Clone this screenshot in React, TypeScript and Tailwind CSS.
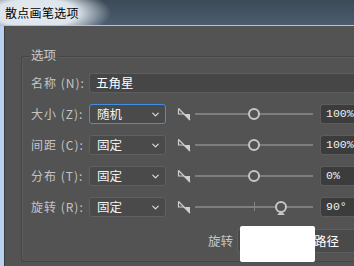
import { ChevronDown } from "lucide-react";

const cjk = "font-['Noto_Sans_CJK_SC','Noto_Sans',sans-serif]";

type Row = {
  label: string;
  value: string;
  focused?: boolean;
  amount: string;
  knob: number;
  tick?: boolean;
};

const rows: Row[] = [
  { label: "大小 (Z):", value: "随机", focused: true, amount: "100%", knob: 59 },
  { label: "间距 (C):", value: "固定", amount: "100%", knob: 59 },
  { label: "分布 (T):", value: "固定", amount: "0%", knob: 59 },
  { label: "旋转 (R):", value: "固定", amount: "90°", knob: 86, tick: true },
];

const RampIcon = () => (
  <svg width="14" height="14" viewBox="0 0 14 14" className="shrink-0">
    <path d="M1.5 1.5 L1.5 7 L7 7" fill="none" stroke="#cfcfcf" strokeWidth="1.2" />
    <path d="M1.5 1.5 L13 13" stroke="#cfcfcf" strokeWidth="1.2" />
    <path d="M6.5 7 L13 7 L13 13.5 Z" fill="#cfcfcf" />
  </svg>
);

const Slider = ({ knob, tick }: { knob: number; tick?: boolean }) => (
  <div className="relative w-[118px] h-[20px] flex items-center">
    <div className="w-full h-[2px] bg-[#7e7e7e]" />
    {tick && <div className="absolute left-[59px] top-[5px] w-px h-[9px] bg-[#858585]" />}
    {tick && (
      <div
        className="absolute top-[14px] w-0 h-0 border-l-[4px] border-r-[4px] border-b-[4px] border-l-transparent border-r-transparent border-b-[#c6c6c6]"
        style={{ left: knob - 4 }}
      />
    )}
    <div
      className="absolute top-[4px] w-[12px] h-[12px] rounded-full border-2 border-[#c6c6c6] bg-[#535353]"
      style={{ left: knob - 6 }}
    />
  </div>
);

const Select = ({ value, focused }: { value: string; focused?: boolean }) => (
  <div
    className={`w-[77px] h-[20px] rounded-[3px] flex items-center justify-between pl-[7px] pr-[4px] bg-[#4a4a4a] ${
      focused ? "border-[1.5px] border-[#3f8fe4]" : "border border-[#606060]"
    }`}
  >
    <span className="text-[12.5px] leading-none text-[#f2f2f2]">{value}</span>
    <ChevronDown size={11} strokeWidth={2.6} color="#dcdcdc" />
  </div>
);

export default function App() {
  return (
    <div className={`w-[354px] h-[266px] overflow-hidden flex flex-col bg-[#535353] ${cjk}`}>
      <div className="h-[26px] shrink-0 flex items-center pl-[5px] border-b border-[#b3c3d3] bg-[radial-gradient(ellipse_75px_26px_at_36px_13px,#e6ebf0_0%,#dde4eb_55%,rgba(220,228,236,0)_100%),linear-gradient(180deg,#3d4a58,#4b5d70)]">
        <span className="text-[12px] text-black leading-none tracking-[0.3px]">散点画笔选项</span>
      </div>

      <div className="flex flex-1 min-h-0">
        <div className="w-[4px] bg-[#b9d0ee] shrink-0" />
        <div className="w-px bg-[#3c3c3c] shrink-0" />

        <div className="flex-1 pl-[16px] pt-[30px]">
          <div className="relative h-[206px] rounded-tl-[3px] rounded-bl-[3px] border border-r-0 border-[#454545] shadow-[inset_1px_1px_0_#5c5c5c] pt-[16px] pl-[9px] flex flex-col gap-[11px]">
            <span className="absolute -top-[8px] left-[7px] px-[2px] bg-[#535353] text-[12.5px] leading-none text-[#c9c9c9]">
              选项
            </span>

            <div className="flex items-center h-[20px]">
              <span className="w-[58px] text-[12px] tracking-[1px] text-[#c4c4c4] whitespace-nowrap">名称 (N):</span>
              <div className="flex-1 h-[20px] flex items-center pl-[6px] bg-[#464646] border border-r-0 border-[#5e5e5e] rounded-l-[3px]">
                <span className="text-[12.5px] leading-none text-white">五角星</span>
              </div>
            </div>

            {rows.map((r) => (
              <div key={r.label} className="flex items-center h-[20px]">
                <span className="w-[58px] text-[12px] tracking-[1px] text-[#c4c4c4] whitespace-nowrap">{r.label}</span>
                <Select value={r.value} focused={r.focused} />
                <div className="ml-[11px] mr-[4px] flex items-center">
                  <RampIcon />
                </div>
                <Slider knob={r.knob} tick={r.tick} />
                <div className="ml-[7px] flex-1 h-[20px] flex items-center pl-[5px] bg-[#3c3c3c] border border-r-0 border-[#5c5c5c] rounded-l-[3px]">
                  <span className="font-['Liberation_Mono',monospace] text-[11.5px] leading-none text-[#f0f0f0]">
                    {r.amount}
                  </span>
                </div>
              </div>
            ))}

            <div className="relative flex items-center h-[24px] mt-[1px]">
              <span className="ml-[177px] w-[29px] text-[12.5px] text-[#c4c4c4] whitespace-nowrap">旋转</span>
              <div className="flex-1 h-[24px] flex items-center pl-[76px] bg-[#4a4a4a] border border-r-0 border-[#5e5e5e] rounded-l-[3px]">
                <span className="text-[12.5px] leading-none text-white">路径</span>
              </div>
              <div className="absolute left-[209px] -top-[3px] w-[75px] h-[36px] bg-white rounded-[2px]" />
            </div>
          </div>
        </div>
      </div>
    </div>
  );
}
